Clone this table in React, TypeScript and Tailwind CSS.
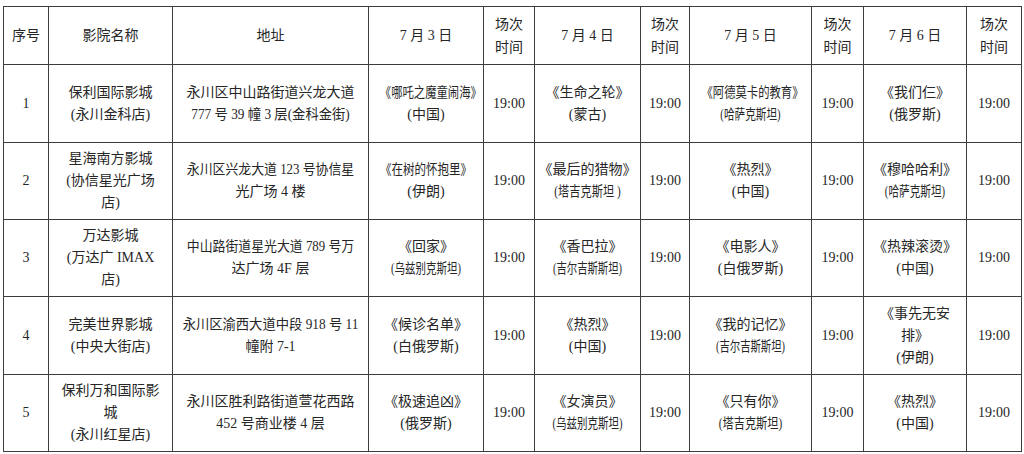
import React from "react";

type Line = { t: string; s?: string };
type Cell = Line[];

const L = (t: string, s?: string): Line => ({ t, s });

const header: Cell[] = [
  [L("序号")],
  [L("影院名称")],
  [L("地址")],
  [L("7 月 3 日")],
  [L("场次"), L("时间")],
  [L("7 月 4 日")],
  [L("场次"), L("时间")],
  [L("7 月 5 日")],
  [L("场次"), L("时间")],
  [L("7 月 6 日")],
  [L("场次"), L("时间")],
];

const T = [L("19:00")];

const rows: { h: string; cells: Cell[] }[] = [
  {
    h: "h-[78px]",
    cells: [
      [L("1")],
      [L("保利国际影城"), L("(永川金科店)")],
      [L("永川区中山路街道兴龙大道"), L("777 号 39 幢 3 层(金科金街)", "scale-x-[0.95]")],
      [L("《哪吒之魔童闹海》", "scale-x-[0.81]"), L("(中国)")],
      T,
      [L("《生命之轮》"), L("(蒙古)")],
      T,
      [L("《阿德莫卡的教育》", "scale-x-[0.81]"), L("(哈萨克斯坦)", "scale-x-[0.76]")],
      T,
      [L("《我们仨》"), L("(俄罗斯)")],
      T,
    ],
  },
  {
    h: "h-[77px]",
    cells: [
      [L("2")],
      [L("星海南方影城"), L("(协信星光广场"), L("店)")],
      [L("永川区兴龙大道 123 号协信星", "scale-x-[0.92]"), L("光广场 4 楼")],
      [L("《在树的怀抱里》", "scale-x-[0.82]"), L("(伊朗)")],
      T,
      [L("《最后的猎物》"), L("(塔吉克斯坦 )", "scale-x-[0.8]")],
      T,
      [L("《热烈》"), L("(中国)")],
      T,
      [L("《穆哈哈利》"), L("(哈萨克斯坦)", "scale-x-[0.76]")],
      T,
    ],
  },
  {
    h: "h-[77px]",
    cells: [
      [L("3")],
      [L("万达影城"), L("(万达广 IMAX"), L("店)")],
      [L("中山路街道星光大道 789 号万", "scale-x-[0.92]"), L("达广场 4F 层")],
      [L("《回家》"), L("(乌兹别克斯坦)", "scale-x-[0.75]")],
      T,
      [L("《香巴拉》"), L("(吉尔吉斯斯坦)", "scale-x-[0.74]")],
      T,
      [L("《电影人》"), L("(白俄罗斯)")],
      T,
      [L("《热辣滚烫》"), L("(中国)")],
      T,
    ],
  },
  {
    h: "h-[78px]",
    cells: [
      [L("4")],
      [L("完美世界影城"), L("(中央大街店)")],
      [L("永川区渝西大道中段 918 号 11", "scale-x-[0.95]"), L("幢附 7-1")],
      [L("《候诊名单》"), L("(白俄罗斯)")],
      T,
      [L("《热烈》"), L("(中国)")],
      T,
      [L("《我的记忆》"), L("(吉尔吉斯斯坦)", "scale-x-[0.74]")],
      T,
      [L("《事先无安"), L("排》"), L("(伊朗)")],
      T,
    ],
  },
  {
    h: "h-[77px]",
    cells: [
      [L("5")],
      [L("保利万和国际影"), L("城"), L("(永川红星店)")],
      [L("永川区胜利路街道萱花西路"), L("452 号商业楼 4 层")],
      [L("《极速追凶》"), L("(俄罗斯)")],
      T,
      [L("《女演员》"), L("(乌兹别克斯坦)", "scale-x-[0.75]")],
      T,
      [L("《只有你》"), L("(塔吉克斯坦)", "scale-x-[0.8]")],
      T,
      [L("《热烈》"), L("(中国)")],
      T,
    ],
  },
];

const widths = [
  "w-[45px]",
  "w-[124px]",
  "w-[196px]",
  "w-[115px]",
  "w-[51px]",
  "w-[106px]",
  "w-[49px]",
  "w-[122px]",
  "w-[52px]",
  "w-[103px]",
  "w-[55px]",
];

function CellView({ cell }: { cell: Cell }) {
  return (
    <>
      {cell.map((l, i) => (
        <div key={i} className={"whitespace-nowrap " + (l.s ?? "")}>
          {l.t}
        </div>
      ))}
    </>
  );
}

export default function App() {
  return (
    <div
      className="bg-white w-[1024px] h-[454px] overflow-hidden pt-[6px] pl-[3px] text-[#262626] text-[14px] leading-[23px]"
      style={{
        fontFamily:
          '"Liberation Serif", "Noto Sans CJK SC", serif',
      }}
    >
      <table className="table-fixed border-collapse w-[1018px]">
        <colgroup>
          {widths.map((w, i) => (
            <col key={i} className={w} />
          ))}
        </colgroup>
        <thead>
          <tr className="h-[58px]">
            {header.map((c, i) => (
              <th
                key={i}
                className="border border-[#3c3c3c] font-normal text-center align-middle p-0"
              >
                <CellView cell={c} />
              </th>
            ))}
          </tr>
        </thead>
        <tbody>
          {rows.map((r, ri) => (
            <tr key={ri} className={r.h}>
              {r.cells.map((c, ci) => (
                <td
                  key={ci}
                  className="border border-[#3c3c3c] text-center align-middle p-0 leading-[22px]"
                >
                  <CellView cell={c} />
                </td>
              ))}
            </tr>
          ))}
        </tbody>
      </table>
    </div>
  );
}
